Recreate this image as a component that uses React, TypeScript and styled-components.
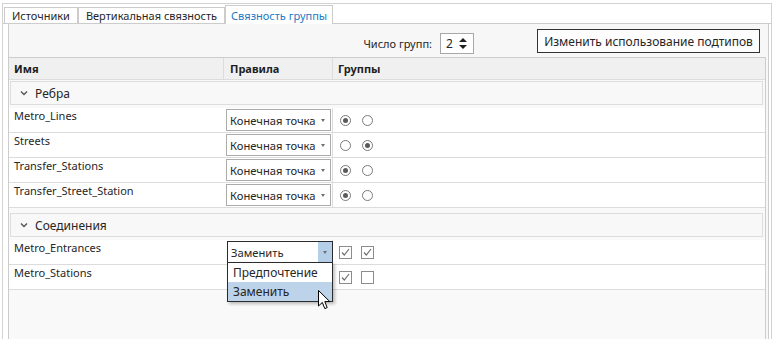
import React from "react";
import styled, { createGlobalStyle } from "styled-components";

const GlobalStyle = createGlobalStyle`
  html, body {
    margin: 0;
    padding: 0;
    background: #ffffff;
  }
  body {
    font-family: "Noto Sans", "Open Sans", sans-serif;
    font-size: 11px;
    color: #262626;
    overflow: hidden;
  }
`;

const Frame = styled.div`
  margin: 3px 0 0 2px;
  width: 770px;
  height: 336px;
  box-sizing: border-box;
  border: 1px solid #d2d2d2;
  border-bottom: none;
  display: flex;
  flex-direction: column;
`;

const TabStrip = styled.div`
  height: 19px;
  padding-left: 1px;
  display: flex;
  align-items: flex-end;
  border-bottom: 1px solid #cccccc;
`;

const Tab = styled.div<{ $active?: boolean }>`
  box-sizing: border-box;
  height: ${(p) => (p.$active ? "19px" : "16px")};
  margin-bottom: ${(p) => (p.$active ? "-1px" : "0")};
  padding: 0 ${(p) => (p.$active ? "5px" : "7px")};
  display: flex;
  align-items: center;
  border: 1px solid #cccccc;
  border-bottom: none;
  background: #ffffff;
  color: ${(p) => (p.$active ? "#1c7ac6" : "#262626")};
  white-space: nowrap;
  position: relative;
  z-index: ${(p) => (p.$active ? 1 : 0)};
`;

const Panel = styled.div`
  flex: 1;
  margin: 0 2px 0 5px;
  border-left: 1px solid #cccccc;
  border-right: 1px solid #cccccc;
  background: #f7f7f7;
  display: flex;
  flex-direction: column;
`;

const Toolbar = styled.div`
  height: 33px;
  padding-right: 8px;
  display: flex;
  align-items: flex-start;
  justify-content: flex-end;
`;

const Label = styled.span`
  margin-top: 9px;
  line-height: 21px;
  margin-right: 8px;
`;

const Spinner = styled.div`
  margin-top: 9px;
  margin-right: 63px;
  box-sizing: border-box;
  width: 34px;
  height: 21px;
  border: 1px solid #a8a8a8;
  background: #ffffff;
  display: flex;
  align-items: center;
  justify-content: space-between;
  padding: 0 6px 0 5px;
  font-size: 12px;
`;

const SpinArrows = styled.div`
  display: flex;
  flex-direction: column;
  gap: 3px;
`;

const Tri = styled.span<{ $down?: boolean }>`
  width: 0;
  height: 0;
  border-left: 4px solid transparent;
  border-right: 4px solid transparent;
  ${(p) =>
    p.$down ? "border-top: 4px solid #1f1f1f;" : "border-bottom: 4px solid #1f1f1f;"}
`;

const Button = styled.button`
  margin-top: 5px;
  box-sizing: border-box;
  width: 223px;
  height: 24px;
  border: 1px solid #333333;
  background: #fdfdfd;
  font-family: inherit;
  font-size: 12px;
  color: #262626;
  padding: 0;
`;

const Table = styled.div`
  flex: 1;
  margin-right: 2px;
  border-top: 1px solid #cccccc;
  border-right: 1px solid #cccccc;
  background: #f9f9f9;
  display: flex;
  flex-direction: column;
`;

const HeaderRow = styled.div`
  display: grid;
  grid-template-columns: 215px 109px 1fr;
  height: 21px;
  background: #f0f0f0;
  border-bottom: 1px solid #dcdcdc;
`;

const HeaderCell = styled.div<{ $pad: number }>`
  display: flex;
  align-items: center;
  padding-left: ${(p) => p.$pad}px;
  font-weight: 700;
  color: #1e1e1e;
  border-right: 1px solid #dcdcdc;
  &:last-child {
    border-right: none;
  }
`;

const Section = styled.div`
  display: flex;
  flex-direction: column;
`;

const GroupBox = styled.div<{ $first?: boolean }>`
  margin: ${(p) => (p.$first ? "1px" : "5px")} 2px 3px 1px;
  height: 22px;
  border: 1px solid #dddddd;
  background: #f8f8f8;
  display: flex;
  align-items: center;
  padding-left: 9px;
  gap: 7px;
  font-size: 12px;
`;

const Row = styled.div`
  display: grid;
  grid-template-columns: 215px 109px 1fr;
  height: 24px;
  background: #ffffff;
  border-bottom: 1px solid #dcdcdc;
`;

const NameCell = styled.div`
  padding-left: 5px;
  line-height: 16px;
`;

const RuleCell = styled.div`
  position: relative;
  border-right: 1px solid #dcdcdc;
`;

const Combo = styled.div<{ $open?: boolean }>`
  position: relative;
  box-sizing: border-box;
  margin: 1px 0 0 ${(p) => (p.$open ? "3px" : "2px")};
  width: ${(p) => (p.$open ? "106px" : "105px")};
  height: ${(p) => (p.$open ? "23px" : "22px")};
  border: 1px solid ${(p) => (p.$open ? "#2b2b2b" : "#ababab")};
  background: #ffffff;
  display: flex;
  align-items: center;
  padding-left: 3px;
  z-index: ${(p) => (p.$open ? 2 : 0)};
`;

const ComboText = styled.span`
  flex: 1;
  white-space: nowrap;
  overflow: hidden;
  font-size: 11.2px;
`;

const ComboArrow = styled.span<{ $open?: boolean }>`
  align-self: stretch;
  width: 14px;
  flex-shrink: 0;
  display: flex;
  align-items: center;
  justify-content: center;
  background: ${(p) => (p.$open ? "#b5cfe8" : "transparent")};
  &::after {
    content: "";
    border-left: 2.5px solid transparent;
    border-right: 2.5px solid transparent;
    border-top: 3px solid #707070;
  }
`;

const DropList = styled.div`
  position: absolute;
  left: -1px;
  right: -1px;
  top: calc(100% - 1px);
  border: 1px solid #2b2b2b;
  background: #ffffff;
  box-shadow: 2px 2px 3px rgba(0, 0, 0, 0.25);
`;

const DropItem = styled.div<{ $hover?: boolean }>`
  height: 19px;
  line-height: 19px;
  padding-left: 5px;
  font-size: 12px;
  background: ${(p) => (p.$hover ? "#bcd3ea" : "#ffffff")};
`;

const Cursor = styled.svg`
  position: absolute;
  left: 90px;
  top: 48px;
  z-index: 3;
`;

const GroupCell = styled.div<{ $check?: boolean }>`
  display: flex;
  align-items: center;
  padding-left: ${(p) => (p.$check ? "6px" : "7px")};
  gap: ${(p) => (p.$check ? "9px" : "11px")};
`;

const Radio = styled.span<{ $on?: boolean }>`
  box-sizing: border-box;
  width: 11px;
  height: 11px;
  border-radius: 50%;
  border: 1px solid #7a7a7a;
  background: #ffffff;
  display: flex;
  align-items: center;
  justify-content: center;
  &::after {
    content: "";
    width: 5px;
    height: 5px;
    border-radius: 50%;
    background: ${(p) => (p.$on ? "#5a5a5a" : "transparent")};
  }
`;

const Check = styled.span`
  box-sizing: border-box;
  width: 13px;
  height: 13px;
  border: 1px solid #8c8c8c;
  background: #ffffff;
  display: flex;
  align-items: center;
  justify-content: center;
`;

const Chevron = () => (
  <svg width="8" height="6" viewBox="0 0 8 6">
    <path d="M1 1.5 L4 4.5 L7 1.5" fill="none" stroke="#555" strokeWidth="1.4" />
  </svg>
);

const Tick = () => (
  <svg width="11" height="11" viewBox="0 0 11 11">
    <path d="M2 5.5 L4.3 8 L9 2" fill="none" stroke="#6e6e6e" strokeWidth="1.2" />
  </svg>
);

type Edge = { name: string; on: number };

const edges: Edge[] = [
  { name: "Metro_Lines", on: 0 },
  { name: "Streets", on: 1 },
  { name: "Transfer_Stations", on: 0 },
  { name: "Transfer_Street_Station", on: 0 },
];

const junctions = [
  { name: "Metro_Entrances", checks: [true, true], open: true },
  { name: "Metro_Stations", checks: [true, false], open: false },
];

export default function App() {
  return (
    <>
      <GlobalStyle />
      <Frame>
        <TabStrip>
          <Tab>Источники</Tab>
          <Tab>Вертикальная связность</Tab>
          <Tab $active>Связность группы</Tab>
        </TabStrip>
        <Panel>
          <Toolbar>
            <Label>Число групп:</Label>
            <Spinner>
              <span>2</span>
              <SpinArrows>
                <Tri />
                <Tri $down />
              </SpinArrows>
            </Spinner>
            <Button>Изменить использование подтипов</Button>
          </Toolbar>
          <Table>
            <HeaderRow>
              <HeaderCell $pad={5}>Имя</HeaderCell>
              <HeaderCell $pad={6}>Правила</HeaderCell>
              <HeaderCell $pad={5}>Группы</HeaderCell>
            </HeaderRow>
            <Section>
              <GroupBox $first>
                <Chevron />
                <span>Ребра</span>
              </GroupBox>
              {edges.map((e) => (
                <Row key={e.name}>
                  <NameCell>{e.name}</NameCell>
                  <RuleCell>
                    <Combo>
                      <ComboText>Конечная точка</ComboText>
                      <ComboArrow />
                    </Combo>
                  </RuleCell>
                  <GroupCell>
                    <Radio $on={e.on === 0} />
                    <Radio $on={e.on === 1} />
                  </GroupCell>
                </Row>
              ))}
            </Section>
            <Section>
              <GroupBox>
                <Chevron />
                <span>Соединения</span>
              </GroupBox>
              {junctions.map((j) => (
                <Row key={j.name}>
                  <NameCell>{j.name}</NameCell>
                  <RuleCell>
                    {j.open && (
                      <Combo $open>
                        <ComboText>Заменить</ComboText>
                        <ComboArrow $open />
                        <DropList>
                          <DropItem>Предпочтение</DropItem>
                          <DropItem $hover>Заменить</DropItem>
                        </DropList>
                        <Cursor width="13" height="20" viewBox="0 0 13 20">
                          <path
                            d="M0.5 0.5 L0.5 16 L4.3 12.4 L6.8 18.6 L9.2 17.6 L6.8 11.6 L11.8 11.6 Z"
                            fill="#ffffff"
                            stroke="#000000"
                            strokeWidth="1"
                          />
                        </Cursor>
                      </Combo>
                    )}
                  </RuleCell>
                  <GroupCell $check>
                    {j.checks.map((c, i) => (
                      <Check key={i}>{c && <Tick />}</Check>
                    ))}
                  </GroupCell>
                </Row>
              ))}
            </Section>
          </Table>
        </Panel>
      </Frame>
    </>
  );
}
